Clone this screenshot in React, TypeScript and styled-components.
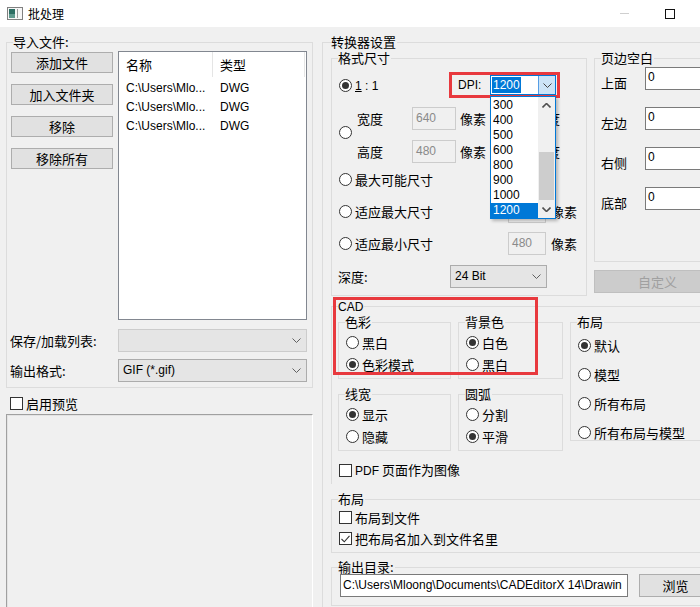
import React from 'react';
import styled, { createGlobalStyle, css } from 'styled-components';

const GlobalStyle = createGlobalStyle`
  html, body { margin: 0; padding: 0; background: #f0f0f0; }
  body {
    font-family: "Noto Sans CJK SC", "Noto Sans", sans-serif;
    font-size: 13px;
    line-height: 15px;
    color: #000;
  }
  *, *::before, *::after { box-sizing: border-box; }
`;

// Latin runs are narrower than the CJK face's own Latin glyphs
const Latin = styled.span`
  font-family: "Liberation Sans", Arial, sans-serif;
  font-size: 12px;
`;

const Window = styled.div`
  width: 700px;
  height: 607px;
  overflow: hidden;
  display: flex;
  flex-direction: column;
  background: #f0f0f0;
`;

const TitleBar = styled.div`
  flex: none;
  height: 27px;
  background: #fff;
  display: flex;
  align-items: center;
  padding-left: 7px;
`;

const TitleText = styled.span`
  font-size: 12px;
  margin-left: 5px;
`;

const Caption = styled.div`
  margin-left: auto;
  display: flex;
  align-items: center;
`;

const MinGlyph = styled.span`
  width: 9px;
  height: 1px;
  background: #cfcfcf;
  margin-right: 36px;
`;

const MaxGlyph = styled.span`
  width: 10px;
  height: 10px;
  border: 1px solid #111;
  margin-right: 25px;
`;

const Body = styled.div`
  flex: 1;
  display: flex;
  min-height: 0;
`;

const LeftPane = styled.div`
  flex: none;
  width: 322px;
  padding: 15px 0 0 6px;
  display: flex;
  flex-direction: column;
`;

const GroupBox = styled.div<{ $w?: number; $h?: number; $open?: boolean }>`
  position: relative;
  flex: none;
  border: 1px solid #dcdcdc;
  ${(p) => p.$w !== undefined && css`width: ${p.$w}px;`}
  ${(p) => p.$h !== undefined && css`height: ${p.$h}px;`}
  ${(p) => p.$open && css`border-right: none; border-bottom: none;`}
`;

const Legend = styled.span<{ $left?: number }>`
  position: absolute;
  top: -8px;
  left: ${(p) => p.$left ?? 6}px;
  padding-right: 1px;
  line-height: 14px;
  background: #f0f0f0;
  white-space: nowrap;
`;

const ImportBody = styled.div`
  height: 100%;
  padding: 8px 5px 5px 4px;
  display: flex;
  flex-direction: column;
`;

const ImportTop = styled.div`
  display: flex;
  gap: 5px;
  height: 269px;
`;

const ButtonColumn = styled.div`
  width: 102px;
  display: flex;
  flex-direction: column;
  gap: 11px;
  padding-top: 1px;
`;

const PushButton = styled.button<{ $w?: number; $h?: number; $off?: boolean }>`
  flex: none;
  height: ${(p) => p.$h ?? 21}px;
  ${(p) => p.$w !== undefined && css`width: ${p.$w}px;`}
  padding: 0;
  font: inherit;
  color: ${(p) => (p.$off ? '#a0a0a0' : '#000')};
  background: ${(p) => (p.$off ? '#cccccc' : '#e1e1e1')};
  border: 1px solid ${(p) => (p.$off ? '#bfbfbf' : '#adadad')};
`;

const FileList = styled.div`
  width: 189px;
  background: #fff;
  border: 1px solid #828790;
  display: flex;
  flex-direction: column;
`;

const ListHeader = styled.div`
  display: flex;
  height: 25px;
  margin-bottom: 1px;
`;

const HeaderCell = styled.div<{ $w: number }>`
  width: ${(p) => p.$w}px;
  padding-left: 7px;
  display: flex;
  align-items: center;
  border-right: 1px solid #e5e5e5;
`;

const ListRow = styled.div`
  display: flex;
  height: 19px;
  align-items: center;
`;

const Cell = styled.div<{ $w: number }>`
  width: ${(p) => p.$w}px;
  padding-left: 7px;
  white-space: nowrap;
  overflow: hidden;
`;

const FieldRow = styled.div<{ $top: number }>`
  display: flex;
  align-items: center;
  height: 23px;
  margin-top: ${(p) => p.$top}px;
`;

const FieldLabel = styled.span<{ $w: number }>`
  width: ${(p) => p.$w}px;
  margin-left: -1px;
  white-space: nowrap;
`;

const Combo = styled.div<{ $w: number; $off?: boolean }>`
  width: ${(p) => p.$w}px;
  height: 23px;
  display: flex;
  align-items: center;
  justify-content: space-between;
  padding: 0 5px 0 4px;
  background: #e5e5e5;
  border: 1px solid ${(p) => (p.$off ? '#cccccc' : '#acacac')};
`;

const CheckLine = styled.div<{ $top: number; $left?: number }>`
  display: flex;
  align-items: center;
  height: 15px;
  margin-top: ${(p) => p.$top}px;
  margin-left: ${(p) => p.$left ?? 0}px;
  gap: 3px;
  white-space: nowrap;
`;

const Box = styled.span`
  width: 13px;
  height: 13px;
  flex: none;
  border: 1px solid #333;
  background: #fff;
  display: grid;
  place-items: center;
`;

const Preview = styled.div`
  flex: 1;
  width: 307px;
  margin-top: 3px;
  border-top: 1px solid #a0a0a0;
  border-left: 1px solid #a0a0a0;
  border-right: 1px solid #fff;
  box-shadow: inset 1px 1px 0 #e3e3e3;
`;

const RightPane = styled.div`
  flex: none;
  width: 420px;
  padding-top: 15px;
  display: flex;
  flex-direction: column;
`;

const ConverterInner = styled.div`
  padding: 15px 0 0 8px;
  display: flex;
  flex-direction: column;
`;

const TopRow = styled.div`
  display: flex;
  gap: 7px;
  align-items: flex-start;
`;

const FormatInner = styled.div`
  padding-left: 7px;
  display: flex;
  flex-direction: column;
`;

const Line = styled.div<{ $top: number; $h: number }>`
  display: flex;
  align-items: center;
  margin-top: ${(p) => p.$top}px;
  height: ${(p) => p.$h}px;
`;

const Option = styled.div<{ $w?: number }>`
  display: flex;
  align-items: center;
  gap: 3px;
  flex: none;
  white-space: nowrap;
  ${(p) => p.$w !== undefined && css`width: ${p.$w}px;`}
`;

const RadioDot = styled.span<{ $on?: boolean; $lift?: number }>`
  width: 13px;
  height: 13px;
  flex: none;
  border-radius: 50%;
  border: 1px solid #333;
  background: #fff;
  display: grid;
  place-items: center;
  ${(p) => p.$lift !== undefined && css`align-self: flex-start; margin-top: ${p.$lift}px;`}
  ${(p) =>
    p.$on &&
    css`
      &::after {
        content: '';
        width: 7px;
        height: 7px;
        border-radius: 50%;
        background: #333;
      }
    `}
`;

const DpiBox = styled.div`
  width: 111px;
  height: 26px;
  border: 3px solid #e8393e;
  display: flex;
  align-items: center;
  padding-left: 6px;
`;

const DpiLabel = styled(Latin)`
  width: 32px;
`;

const DpiCombo = styled.div`
  position: relative;
  width: 66px;
  height: 20px;
  border: 1px solid #0078d7;
  background: #fff;
  display: flex;
  align-items: center;
`;

const DpiText = styled.div`
  flex: 1;
  padding-left: 1px;
  display: flex;
  align-items: center;
`;

const Selected = styled(Latin)`
  background: #0078d7;
  color: #fff;
  line-height: 16px;
  padding: 0 1px;
`;

const DropButton = styled.div`
  width: 17px;
  height: 100%;
  background: #cce4f7;
  border-left: 1px solid #569de5;
  display: grid;
  place-items: center;
`;

const DropList = styled.div`
  position: absolute;
  top: 20px;
  left: -1px;
  z-index: 10;
  width: 66px;
  height: 123px;
  background: #fff;
  border: 1px solid #0078d7;
  box-shadow: 2px 2px 3px rgba(0, 0, 0, 0.25);
  display: flex;
`;

const DropItems = styled.div`
  flex: 1;
  display: flex;
  flex-direction: column;
  padding-top: 1px;
`;

const DropItem = styled(Latin)<{ $sel?: boolean }>`
  display: block;
  height: 15px;
  line-height: 15px;
  padding-left: 2px;
  ${(p) => p.$sel && css`background: #0078d7; color: #fff;`}
`;

const ScrollBar = styled.div`
  width: 17px;
  background: #f0f0f0;
  display: flex;
  flex-direction: column;
`;

const ScrollArrow = styled.div`
  height: 17px;
  display: grid;
  place-items: center;
`;

const ScrollTrack = styled.div`
  flex: 1;
  padding: 38px 1px 0;
`;

const Thumb = styled.div`
  height: 48px;
  background: #cdcdcd;
`;

const SizeGrid = styled.div`
  display: flex;
  flex-direction: column;
  gap: 10px;
  margin-left: 5px;
`;

const SizeLine = styled.div`
  display: flex;
  align-items: center;
  height: 23px;
`;

const SizeLabel = styled.span`
  width: 55px;
`;

const NumBox = styled.div<{ $w: number; $off?: boolean }>`
  width: ${(p) => p.$w}px;
  height: 23px;
  flex: none;
  border: 1px solid ${(p) => (p.$off ? '#cccccc' : '#7a7a7a')};
  background: ${(p) => (p.$off ? '#f0f0f0' : '#fff')};
  color: ${(p) => (p.$off ? '#8a8a8a' : '#000')};
  padding: ${(p) => (p.$off ? '3px 0 0 3px' : '2px 0 0 2px')};
  font-family: "Liberation Sans", Arial, sans-serif;
  font-size: 12px;
  white-space: nowrap;
  overflow: hidden;
`;

const Unit = styled.span<{ $gap: number }>`
  margin-left: ${(p) => p.$gap}px;
  white-space: nowrap;
`;

const MarginColumn = styled.div`
  width: 127px;
  display: flex;
  flex-direction: column;
  gap: 8px;
`;

const MarginInner = styled.div`
  padding: 8px 0 0 6px;
  display: flex;
  flex-direction: column;
  gap: 17px;
`;

const MarginRow = styled.div`
  display: flex;
  align-items: flex-end;
  height: 23px;
`;

const MarginLabel = styled.span`
  width: 49px;
`;

const CadInner = styled.div`
  padding: 15px 0 0 6px;
  display: flex;
  flex-direction: column;
`;

const CadGrid = styled.div`
  display: grid;
  grid-template-columns: 113px 105px 150px;
  grid-template-rows: 57px 57px;
  column-gap: 7px;
  row-gap: 15px;
`;

const TallGroup = styled(GroupBox)`
  grid-row: span 2;
  border-right: none;
`;

const OptionStack = styled.div<{ $top: number; $gap: number }>`
  display: flex;
  flex-direction: column;
  padding: ${(p) => p.$top}px 0 0 7px;
  gap: ${(p) => p.$gap}px;
`;

const OptLine = styled.div`
  height: 15px;
  display: flex;
  align-items: center;
`;

const Annotation = styled.div`
  position: absolute;
  left: 1px;
  top: -10px;
  width: 205px;
  height: 78px;
  border: 3px solid #e8393e;
  pointer-events: none;
`;

const Section = styled(GroupBox)<{ $top: number }>`
  margin-top: ${(p) => p.$top}px;
  border-right: none;
`;

const OutputRow = styled.div`
  display: flex;
  gap: 11px;
  padding: 6px 0 0 8px;
`;

const PathBox = styled.div`
  width: 288px;
  height: 23px;
  background: #fff;
  border: 1px solid #7a7a7a;
  padding: 3px 0 0 2px;
  font-family: "Liberation Sans", Arial, sans-serif;
  font-size: 12px;
  white-space: nowrap;
  overflow: hidden;
`;

const Chevron = ({ up, color = '#606060', bold }: { up?: boolean; color?: string; bold?: boolean }) => (
  <svg width="9" height="5" viewBox="0 0 9 5" style={{ display: 'block' }}>
    <polyline
      points={up ? '0.5,4.5 4.5,0.5 8.5,4.5' : '0.5,0.5 4.5,4.5 8.5,0.5'}
      fill="none"
      stroke={color}
      strokeWidth={bold ? 1.6 : 1}
    />
  </svg>
);

const Check = () => (
  <svg width="9" height="8" viewBox="0 0 9 8">
    <polyline points="0.5,4 3.3,6.8 8.5,0.8" fill="none" stroke="#333" strokeWidth="1.1" />
  </svg>
);

const AppIcon = () => (
  <svg width="16" height="13" viewBox="0 0 16 13">
    <rect x="0.5" y="0.5" width="15" height="12" fill="#f6f6f6" stroke="#808080" />
    <rect x="2" y="2" width="6" height="9" fill="#2d6e63" />
    <rect x="2" y="7" width="6" height="4" fill="#5f9a8e" />
    <rect x="10" y="2" width="1" height="9" fill="#9a9a9a" />
  </svg>
);

const Radio = ({ on, children, w }: { on?: boolean; children: React.ReactNode; w?: number }) => (
  <Option $w={w}>
    <RadioDot $on={on} />
    <span>{children}</span>
  </Option>
);

const CheckBox = ({ on, children, top, left }: { on?: boolean; children: React.ReactNode; top: number; left?: number }) => (
  <CheckLine $top={top} $left={left}>
    <Box>{on && <Check />}</Box>
    <span>{children}</span>
  </CheckLine>
);

const files = ['C:\\Users\\Mlo...', 'C:\\Users\\Mlo...', 'C:\\Users\\Mlo...'];
const dpis = ['300', '400', '500', '600', '800', '900', '1000', '1200'];
const margins = ['上面', '左边', '右侧', '底部'];

export default function App() {
  return (
    <>
      <GlobalStyle />
      <Window>
        <TitleBar>
          <AppIcon />
          <TitleText>批处理</TitleText>
          <Caption>
            <MinGlyph />
            <MaxGlyph />
          </Caption>
        </TitleBar>
        <Body>
          <LeftPane>
            <GroupBox $w={307} $h={346}>
              <Legend>导入文件:</Legend>
              <ImportBody>
                <ImportTop>
                  <ButtonColumn>
                    {['添加文件', '加入文件夹', '移除', '移除所有'].map((t) => (
                      <PushButton key={t}>{t}</PushButton>
                    ))}
                  </ButtonColumn>
                  <FileList>
                    <ListHeader>
                      <HeaderCell $w={94}>名称</HeaderCell>
                      <HeaderCell $w={92}>类型</HeaderCell>
                    </ListHeader>
                    {files.map((f, i) => (
                      <ListRow key={i}>
                        <Cell $w={94}><Latin>{f}</Latin></Cell>
                        <Cell $w={92}><Latin>DWG</Latin></Cell>
                      </ListRow>
                    ))}
                  </FileList>
                </ImportTop>
                <FieldRow $top={9}>
                  <FieldLabel $w={108}>保存/加载列表:</FieldLabel>
                  <Combo $w={189} $off>
                    <span />
                    <Chevron />
                  </Combo>
                </FieldRow>
                <FieldRow $top={7}>
                  <FieldLabel $w={108}>输出格式:</FieldLabel>
                  <Combo $w={189}>
                    <Latin>GIF (*.gif)</Latin>
                    <Chevron />
                  </Combo>
                </FieldRow>
              </ImportBody>
            </GroupBox>
            <CheckBox top={8} left={4}>
              启用预览
            </CheckBox>
            <Preview />
          </LeftPane>

          <RightPane>
            <GroupBox $open style={{ flex: 1 }}>
              <Legend $left={8}>转换器设置</Legend>
              <ConverterInner>
                <TopRow>
                  <GroupBox $w={256} $h={238}>
                    <Legend>格式尺寸</Legend>
                    <FormatInner>
                      <Line $top={13} $h={26}>
                        <Radio on w={110}>
                          <Latin><u>1</u> : 1</Latin>
                        </Radio>
                        <DpiBox>
                          <DpiLabel>DPI:</DpiLabel>
                          <DpiCombo>
                            <DpiText>
                              <Selected>1200</Selected>
                            </DpiText>
                            <DropButton>
                              <Chevron color="#444" />
                            </DropButton>
                            <DropList>
                              <DropItems>
                                {dpis.map((d) => (
                                  <DropItem key={d} $sel={d === '1200'}>
                                    {d}
                                  </DropItem>
                                ))}
                              </DropItems>
                              <ScrollBar>
                                <ScrollArrow>
                                  <Chevron up bold color="#505050" />
                                </ScrollArrow>
                                <ScrollTrack>
                                  <Thumb />
                                </ScrollTrack>
                                <ScrollArrow>
                                  <Chevron bold color="#505050" />
                                </ScrollArrow>
                              </ScrollBar>
                            </DropList>
                          </DpiCombo>
                        </DpiBox>
                      </Line>
                      <Line $top={9} $h={56}>
                        <RadioDot $lift={19} />
                        <SizeGrid>
                          <SizeLine>
                            <SizeLabel>宽度</SizeLabel>
                            <NumBox $w={44} $off>
                              640
                            </NumBox>
                            <Unit $gap={4}>像素</Unit>
                            <Unit $gap={48}>宽度</Unit>
                          </SizeLine>
                          <SizeLine>
                            <SizeLabel>高度</SizeLabel>
                            <NumBox $w={44} $off>
                              480
                            </NumBox>
                            <Unit $gap={4}>像素</Unit>
                            <Unit $gap={48}>高度</Unit>
                          </SizeLine>
                        </SizeGrid>
                      </Line>
                      <Line $top={4} $h={24}>
                        <Radio>最大可能尺寸</Radio>
                      </Line>
                      <Line $top={8} $h={24}>
                        <Radio w={169}>适应最大尺寸</Radio>
                        <NumBox $w={38} $off>
                          640
                        </NumBox>
                        <Unit $gap={5}>像素</Unit>
                      </Line>
                      <Line $top={8} $h={24}>
                        <Radio w={169}>适应最小尺寸</Radio>
                        <NumBox $w={38} $off>
                          480
                        </NumBox>
                        <Unit $gap={5}>像素</Unit>
                      </Line>
                      <Line $top={10} $h={23}>
                        <FieldLabel $w={112}>深度:</FieldLabel>
                        <Combo $w={97}>
                          <Latin>24 Bit</Latin>
                          <Chevron />
                        </Combo>
                      </Line>
                    </FormatInner>
                  </GroupBox>
                  <MarginColumn>
                    <GroupBox $h={204}>
                      <Legend>页边空白</Legend>
                      <MarginInner>
                        {margins.map((m) => (
                          <MarginRow key={m}>
                            <MarginLabel>{m}</MarginLabel>
                            <NumBox $w={75}>0</NumBox>
                          </MarginRow>
                        ))}
                      </MarginInner>
                    </GroupBox>
                    <PushButton $off $w={127} $h={23}>
                      自定义
                    </PushButton>
                  </MarginColumn>
                </TopRow>

                <Section $open $top={10} $h={178}>
                  <Legend><Latin>CAD</Latin></Legend>
                  <CadInner>
                    <CadGrid>
                      <GroupBox>
                        <Legend>色彩</Legend>
                        <OptionStack $top={12} $gap={7}>
                          <OptLine><Radio>黑白</Radio></OptLine>
                          <OptLine><Radio on>色彩模式</Radio></OptLine>
                        </OptionStack>
                      </GroupBox>
                      <GroupBox>
                        <Legend>背景色</Legend>
                        <OptionStack $top={12} $gap={7}>
                          <OptLine><Radio on>白色</Radio></OptLine>
                          <OptLine><Radio>黑白</Radio></OptLine>
                        </OptionStack>
                      </GroupBox>
                      <TallGroup $h={119}>
                        <Legend>布局</Legend>
                        <OptionStack $top={15} $gap={14}>
                          <OptLine><Radio on>默认</Radio></OptLine>
                          <OptLine><Radio>模型</Radio></OptLine>
                          <OptLine><Radio>所有布局</Radio></OptLine>
                          <OptLine><Radio>所有布局与模型</Radio></OptLine>
                        </OptionStack>
                      </TallGroup>
                      <GroupBox>
                        <Legend>线宽</Legend>
                        <OptionStack $top={12} $gap={7}>
                          <OptLine><Radio on>显示</Radio></OptLine>
                          <OptLine><Radio>隐藏</Radio></OptLine>
                        </OptionStack>
                      </GroupBox>
                      <GroupBox>
                        <Legend>圆弧</Legend>
                        <OptionStack $top={12} $gap={7}>
                          <OptLine><Radio>分割</Radio></OptLine>
                          <OptLine><Radio on>平滑</Radio></OptLine>
                        </OptionStack>
                      </GroupBox>
                    </CadGrid>
                    <CheckBox top={12} left={1}>
                      <Latin>PDF</Latin> 页面作为图像
                    </CheckBox>
                  </CadInner>
                  <Annotation />
                </Section>

                <Section $top={15} $h={54}>
                  <Legend>布局</Legend>
                  <OptionStack $top={10} $gap={6}>
                    <CheckBox top={0}>布局到文件</CheckBox>
                    <CheckBox top={0} on>
                      把布局名加入到文件名里
                    </CheckBox>
                  </OptionStack>
                </Section>

                <Section $top={14} $h={39}>
                  <Legend>输出目录:</Legend>
                  <OutputRow>
                    <PathBox>C:\Users\Mloong\Documents\CADEditorX 14\Drawin</PathBox>
                    <PushButton $w={73} $h={23}>
                      浏览
                    </PushButton>
                  </OutputRow>
                </Section>
              </ConverterInner>
            </GroupBox>
          </RightPane>
        </Body>
      </Window>
    </>
  );
}
